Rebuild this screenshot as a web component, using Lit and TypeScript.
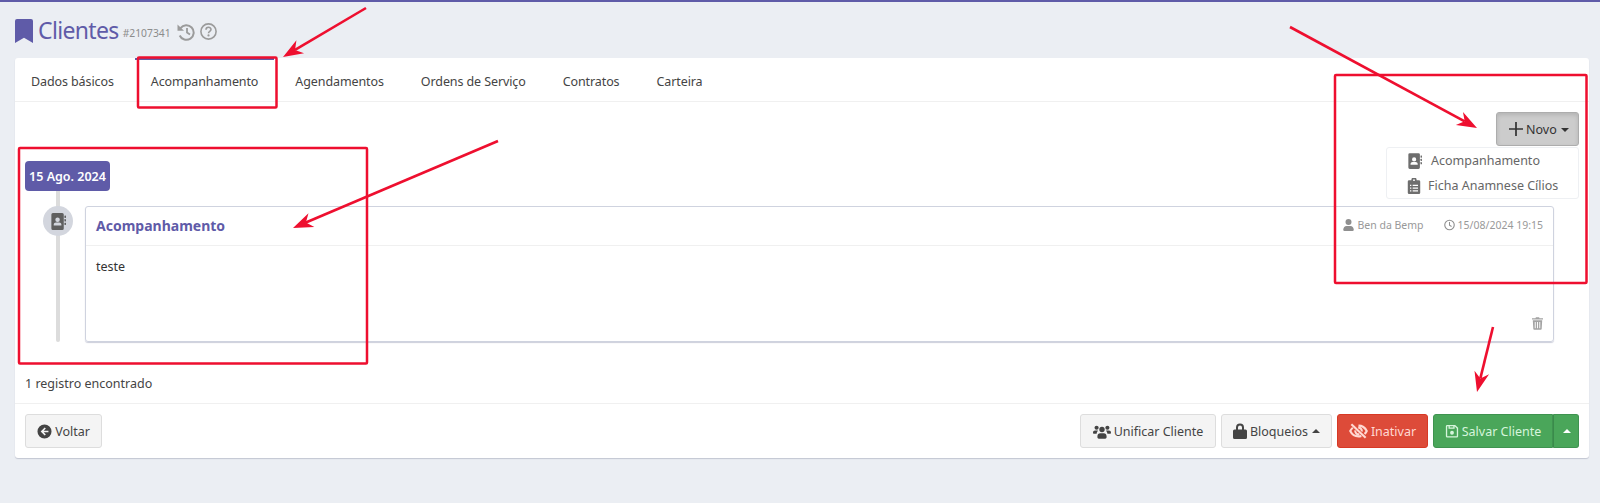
import { LitElement, html, css, svg } from "lit";
import { customElement } from "lit/decorators.js";

const ic = (vb: string, body: unknown, cls = "") =>
  html`<svg class="ic ${cls}" viewBox="${vb}" fill="currentColor" aria-hidden="true">${body}</svg>`;

const addressBook = (cls = "") => ic("0 0 16 18", svg`
  <path fill-rule="evenodd" d="M2 0h10a1.600 1.600 0 0 1 1.600 1.600v14.800A1.600 1.600 0 0 1 12 18H2a1.600 1.600 0 0 1-1.600-1.600V1.600A1.600 1.600 0 0 1 2 0zm5 4.800a2.400 2.400 0 1 0 0 4.800 2.400 2.400 0 0 0 0-4.800zM2.900 13.200h8.200v-.9c0-1.300-1.100-2.200-2.400-2.200H5.300c-1.300 0-2.400.9-2.400 2.200z"/>
  <rect x="14.300" y="2.600" width="1.700" height="2.600" rx=".5"/><rect x="14.300" y="6.400" width="1.700" height="2.600" rx=".5"/><rect x="14.300" y="10.200" width="1.700" height="2.600" rx=".5"/>`, cls);
const clipboard = (cls = "") => ic("0 0 14 18", svg`
  <path fill-rule="evenodd" d="M1.500 2.400H4a3 3 0 0 1 6 0h2.500A1.500 1.500 0 0 1 14 3.900v12.600a1.500 1.500 0 0 1-1.500 1.500h-11A1.500 1.500 0 0 1 0 16.500V3.900a1.500 1.500 0 0 1 1.500-1.500zM7 1.500a1 1 0 1 0 0 2 1 1 0 0 0 0-2zM2.500 7.500v1.400h1.500V7.500zm3 0v1.400h6V7.500zm-3 3.200v1.400h1.500v-1.400zm3 0v1.400h6v-1.400zm-3 3.200v1.400h1.500v-1.400zm3 0v1.400h6v-1.400z"/>`, cls);
const user = (cls = "") => ic("0 0 14 16", svg`<circle cx="7" cy="4" r="4"/><path d="M0 14.400c0-3.200 2.200-5.200 4.400-5.200h5.200c2.200 0 4.400 2 4.400 5.200A1.600 1.600 0 0 1 12.400 16H1.600A1.600 1.600 0 0 1 0 14.400z"/>`, cls);
const clock = (cls = "") => ic("0 0 16 16", svg`<circle cx="8" cy="8" r="6.900" fill="none" stroke="currentColor" stroke-width="1.600"/><path d="M8 3.800v4.500l3 1.800" fill="none" stroke="currentColor" stroke-width="1.500"/>`, cls);
const trash = (cls = "") => ic("0 0 14 16", svg`<path fill-rule="evenodd" d="M5 0h4l.6 1.200H14v1.800H0V1.200h4.400zM1 4h12l-.7 11a1.100 1.100 0 0 1-1.100 1H2.800a1.100 1.100 0 0 1-1.100-1zm2.500 2v8h1.200V6zm2.900 0v8h1.200V6zm2.900 0v8h1.200V6z"/>`, cls);
const users = (cls = "") => ic("0 0 20 16", svg`<circle cx="4" cy="3.800" r="2.300"/><circle cx="16" cy="3.800" r="2.300"/><circle cx="10" cy="5.800" r="3"/><path d="M0 9.200c0-1.500 1-2.400 2.200-2.400h2c.5 0 1 .2 1.400.5A4.800 4.800 0 0 0 4 10.600H1c-.6 0-1-.4-1-1.400zM20 9.200c0-1.500-1-2.400-2.200-2.400h-2c-.5 0-1 .2-1.400.5a4.800 4.800 0 0 1 1.600 3.300h3c.6 0 1-.4 1-1.400zM4.900 13.200c0-1.900 1.400-3.300 3-3.300h4.200c1.600 0 3 1.400 3 3.300v1.300c0 .8-.7 1.500-1.500 1.500h-7.200c-.8 0-1.500-.7-1.500-1.500z"/>`, cls);
const lock = (cls = "") => ic("0 0 14 16", svg`<path fill-rule="evenodd" d="M3 6.500V4.500a4 4 0 0 1 8 0v2h1.500A1.500 1.500 0 0 1 14 8v6.500a1.500 1.500 0 0 1-1.500 1.500h-11A1.500 1.500 0 0 1 0 14.500V8a1.500 1.500 0 0 1 1.500-1.500zm2 0h4V4.500a2 2 0 0 0-4 0z"/>`, cls);
const eyeSlash = (cls = "") => ic("0 0 20 16", svg`<path d="M10 2.300c4.200 0 7.300 2.900 8.700 5.700-.5 1-1.300 2.100-2.300 3.100M13 13.200c-.9.300-1.900.5-3 .5-4.200 0-7.300-2.900-8.700-5.700.6-1.200 1.500-2.400 2.700-3.400" fill="none" stroke="currentColor" stroke-width="2.200"/><path d="M6.600 7.400a3.500 3.500 0 0 0 4.300 4M13.500 8.500a3.500 3.500 0 0 0-3.800-4" fill="none" stroke="currentColor" stroke-width="2.200"/><path d="M2.500 .8l15 14.400" stroke="currentColor" stroke-width="2.200"/>`, cls);
const save = (cls = "") => ic("0 0 16 16", svg`<path fill-rule="evenodd" d="M2.500 1h9.100L15 4.400V14a1.500 1.500 0 0 1-1.500 1.500h-11A1.500 1.500 0 0 1 1 14V2.500A1.500 1.500 0 0 1 2.500 1zm0 1.500V14h11V5l-2.500-2.500v3H4v-3zm3 0v1.600h4V2.500zM8 7.800a2.200 2.200 0 1 0 0 4.400 2.200 2.200 0 0 0 0-4.400z"/>`, cls);
const backCircle = (cls = "") => ic("0 0 16 16", svg`<path fill-rule="evenodd" d="M8 .5a7.500 7.500 0 1 1 0 15A7.500 7.500 0 0 1 8 .5zm.2 3.200L3.900 8l4.300 4.300 1.200-1.200-2.200-2.200h5v-1.800h-5l2.200-2.200z"/>`, cls);
const caret = (up: boolean) => html`<span class="caret ${up ? "up" : "down"}"></span>`;

@customElement("app-root")
export class AppRoot extends LitElement {
  static styles = css`
    :host { display: block; position: relative; height: 503px; overflow: hidden; box-sizing: border-box;
      background: #ebeef3; border-top: 2px solid #5f5ba8; font-family: "Noto Sans", sans-serif; font-size: 12.5px; color: #333; }
    * { box-sizing: border-box; }
    .ic { display: block; flex: none; }

    .head { display: flex; align-items: center; height: 56px; padding: 0 0 0 15px; color: #5f5ba8; }
    .book { width: 18px; height: 24px; margin-right: 5px; margin-top: 2px; }
    .title { font-size: 23px; line-height: 30px; letter-spacing: -.65px; }
    .code { font-size: 10.3px; color: #8c8c8c; margin: 6px 0 0 4px; }
    .hist { width: 18px; height: 18px; color: #9b9b9b; margin: 3px 0 0 6px; }
    .help { width: 17px; height: 17px; color: #9b9b9b; margin: 3px 0 0 5px; }

    .card { margin: 0 11px 0 15px; height: 400px; background: #fff; border-radius: 3px; box-shadow: 0 1px 1px rgba(120,125,150,.35); display: flex; flex-direction: column; }
    .tabs { display: flex; height: 44px; border-bottom: 1px solid #f0f0f0; flex: none; letter-spacing: -.1px; }
    .tab { display: flex; align-items: center; padding: 4px 16px 0; margin-right: 5px; color: #444; white-space: nowrap; }
    .tab.on { border-top: 2px solid #5f5ba8; padding-top: 2px; }

    .body { flex: 1; display: flex; flex-direction: column; padding: 10px 10px 0 10px; min-height: 0; }
    .actions { position: relative; flex: none; height: 49px; display: flex; justify-content: flex-end; align-items: flex-start; }
    .novo { display: flex; align-items: center; gap: 3px; width: 83px; height: 34px; padding: 0 0 0 12px; background: #ccc; border: 1px solid #adadad; border-radius: 3px; color: #333; box-shadow: inset 0 2px 4px rgba(0,0,0,.12); }
    .plus { width: 14px; height: 14px; }
    .menu { position: absolute; right: 0; top: 35px; z-index: 1; width: 193px; height: 52px; background: #fff; border: 1px solid #eef0f3; border-radius: 3px; color: #666; display: flex; flex-direction: column; }
    .mi { height: 26px; display: flex; align-items: center; white-space: nowrap; }
    .mi .ic { width: 14px; height: 16px; color: #6e6e6e; }
    .mi.a { padding-left: 21px; gap: 9px; }
    .mi.b { padding-left: 20px; gap: 7px; }

    .pill { align-self: flex-start; flex: none; display: flex; align-items: center; justify-content: center; width: 85px; height: 30px; background: #5f5ba8; border-radius: 4px; color: #fff; font-weight: 600; white-space: nowrap; }
    .row { display: flex; flex: none; height: 151px; margin-left: 31px; }
    .rail { width: 4px; background: #dcdcdc; border-radius: 0 0 2px 2px; position: relative; flex: none; }
    .dot { position: absolute; left: -13px; top: 15px; width: 30px; height: 30px; border-radius: 50%; background: #d3d6de; color: #5f5f5f; display: flex; align-items: center; justify-content: center; }
    .dot .ic { width: 15px; height: 17px; }
    .item { flex: none; width: 1469px; margin: 15px 0 0 25px; height: 136px; border: 1px solid #cfd3df; border-radius: 3px; box-shadow: 0 1px 1px rgba(130,135,165,.4); display: flex; flex-direction: column; }
    .ihead { height: 39px; flex: none; border-bottom: 1px solid #f0f0f0; display: flex; align-items: center; justify-content: space-between; padding: 0 10px 2px 10px; }
    .ititle { font-size: 14px; font-weight: 700; color: #5f5ba8; }
    .meta { display: flex; align-items: center; font-size: 10.5px; color: #999; gap: 20px; }
    .meta span { display: flex; align-items: center; gap: 3px; white-space: nowrap; }
    .meta .ic { width: 11px; height: 12px; color: #8f8f8f; }
    .ibody { flex: 1; padding: 12px 10px 0; display: flex; flex-direction: column; justify-content: space-between; }
    .del { align-self: flex-end; width: 11px; height: 13px; color: #a3a3a3; margin: 0 0 11px 0; }

    .count { margin-top: 32px; line-height: 20px; color: #444; }

    .foot { flex: none; height: 55px; border-top: 1px solid #f0f0f0; display: flex; justify-content: space-between; padding: 10px 10px 0; }
    .btns { display: flex; gap: 5px; }
    .btn { height: 34px; display: flex; align-items: center; justify-content: center; gap: 3px; border: 1px solid #ddd; border-radius: 3px; background: #f4f4f4; color: #444; white-space: nowrap; }
    .btn .ic { width: 14px; height: 16px; }
    .voltar { width: 77px; } .voltar .ic { width: 15px; height: 15px; }
    .unif { width: 136px; } .unif .ic { width: 18px; height: 15px; }
    .bloq { width: 111px; }
    .inat { width: 91px; background: #dd4b39; border-color: #d73925; color: #ffd9d3; } .inat .ic { width: 19px; height: 16px; }
    .salv { display: flex; }
    .salv .btn { background: #4aa65a; border-color: #3f9350; color: #d6f5dc; }
    .salv .l { width: 120px; border-radius: 3px 0 0 3px; }
    .salv .r { width: 26px; border-left-color: #3a8a4b; border-radius: 0 3px 3px 0; color: #fff; }

    .caret { display: inline-block; width: 0; height: 0; border-left: 4px solid transparent; border-right: 4px solid transparent; margin-left: 1px; }
    .caret.down { border-top: 4px solid currentColor; margin-top: 2px; }
    .caret.up { border-bottom: 4px solid currentColor; }

    .overlay { position: absolute; left: 0; top: -2px; width: 1600px; height: 503px; pointer-events: none; z-index: 5; }
  `;

  render() {
    const arrow = (x1: number, y1: number, x2: number, y2: number) => {
      const a = Math.atan2(y2 - y1, x2 - x1), L = 20, W = 7.5;
      const bx = x2 - Math.cos(a) * L, by = y2 - Math.sin(a) * L;
      const nx = -Math.sin(a) * W, ny = Math.cos(a) * W;
      const nb = 14;
      const cx = x2 - Math.cos(a) * nb, cy = y2 - Math.sin(a) * nb;
      return svg`<line x1=${x1} y1=${y1} x2=${cx} y2=${cy} stroke="#ee0f2f" stroke-width="2.600"/>
        <polygon fill="#ee0f2f" points="${x2},${y2} ${bx + nx},${by + ny} ${cx},${cy} ${bx - nx},${by - ny}"/>`;
    };
    return html`
      <div class="head">
        ${ic("0 0 18 24", svg`<path d="M2 0h14a2 2 0 0 1 2 2v22l-9-5.200L0 24V2a2 2 0 0 1 2-2z"/>`, "book")}
        <span class="title">Clientes</span>
        <span class="code">#2107341</span>
        ${ic("0 0 18 18", svg`<path d="M3.500 5.200A7.300 7.300 0 1 1 2.700 12.500" fill="none" stroke="currentColor" stroke-width="2"/><path d="M.5 1.500l6.500 6.300H.5z"/><path d="M10 5v4.500l3 2" fill="none" stroke="currentColor" stroke-width="1.800"/>`, "hist")}
        ${ic("0 0 17 17", svg`<circle cx="8.500" cy="8.500" r="7.600" fill="none" stroke="currentColor" stroke-width="1.600"/><path d="M6 6.700c0-3.100 5-3.200 5-.2 0 1.900-2.500 1.900-2.500 3.700" fill="none" stroke="currentColor" stroke-width="1.600"/><circle cx="8.500" cy="12.400" r="1.100"/>`, "help")}
      </div>

      <div class="card">
        <div class="tabs">
          <div class="tab">Dados básicos</div>
          <div class="tab on">Acompanhamento</div>
          <div class="tab">Agendamentos</div>
          <div class="tab">Ordens de Serviço</div>
          <div class="tab">Contratos</div>
          <div class="tab">Carteira</div>
        </div>
        <div class="body">
          <div class="actions">
            <div class="novo">
              ${ic("0 0 13 13", svg`<path d="M5.700 0h1.600v5.700H13v1.600H7.300V13H5.700V7.300H0V5.700h5.700z"/>`, "plus")}
              <span>Novo</span>${caret(false)}
            </div>
            <div class="menu">
              <div class="mi a">${addressBook()}<span>Acompanhamento</span></div>
              <div class="mi b">${clipboard()}<span>Ficha Anamnese Cílios</span></div>
            </div>
          </div>
          <div class="pill">15 Ago. 2024</div>
          <div class="row">
            <div class="rail"><div class="dot">${addressBook()}</div></div>
            <div class="item">
              <div class="ihead">
                <span class="ititle">Acompanhamento</span>
                <div class="meta">
                  <span>${user()}Ben da Bemp</span>
                  <span>${clock()}15/08/2024 19:15</span>
                </div>
              </div>
              <div class="ibody">
                <div>teste</div>
                ${trash("del")}
              </div>
            </div>
          </div>
          <div class="count">1 registro encontrado</div>
        </div>
        <div class="foot">
          <div class="btn voltar">${backCircle()}<span>Voltar</span></div>
          <div class="btns">
            <div class="btn unif">${users()}<span>Unificar Cliente</span></div>
            <div class="btn bloq">${lock()}<span>Bloqueios</span>${caret(true)}</div>
            <div class="btn inat">${eyeSlash()}<span>Inativar</span></div>
            <div class="salv">
              <div class="btn l">${save()}<span>Salvar Cliente</span></div>
              <div class="btn r">${caret(true)}</div>
            </div>
          </div>
        </div>
      </div>

      <svg class="overlay" viewBox="0 0 1600 503">
        <g fill="none" stroke="#ee0f2f" stroke-width="2.500">
          <rect x="138" y="57.500" width="138.500" height="50" rx="1"/>
          <rect x="19" y="148" width="348" height="215.500" rx="1"/>
          <rect x="1335" y="75" width="251.500" height="208" rx="1"/>
        </g>
        ${arrow(366, 8, 283, 57)}
        ${arrow(1290, 27, 1477, 128)}
        ${arrow(498, 141, 293, 228)}
        ${arrow(1493, 327, 1477, 392)}
      </svg>
    `;
  }
}
